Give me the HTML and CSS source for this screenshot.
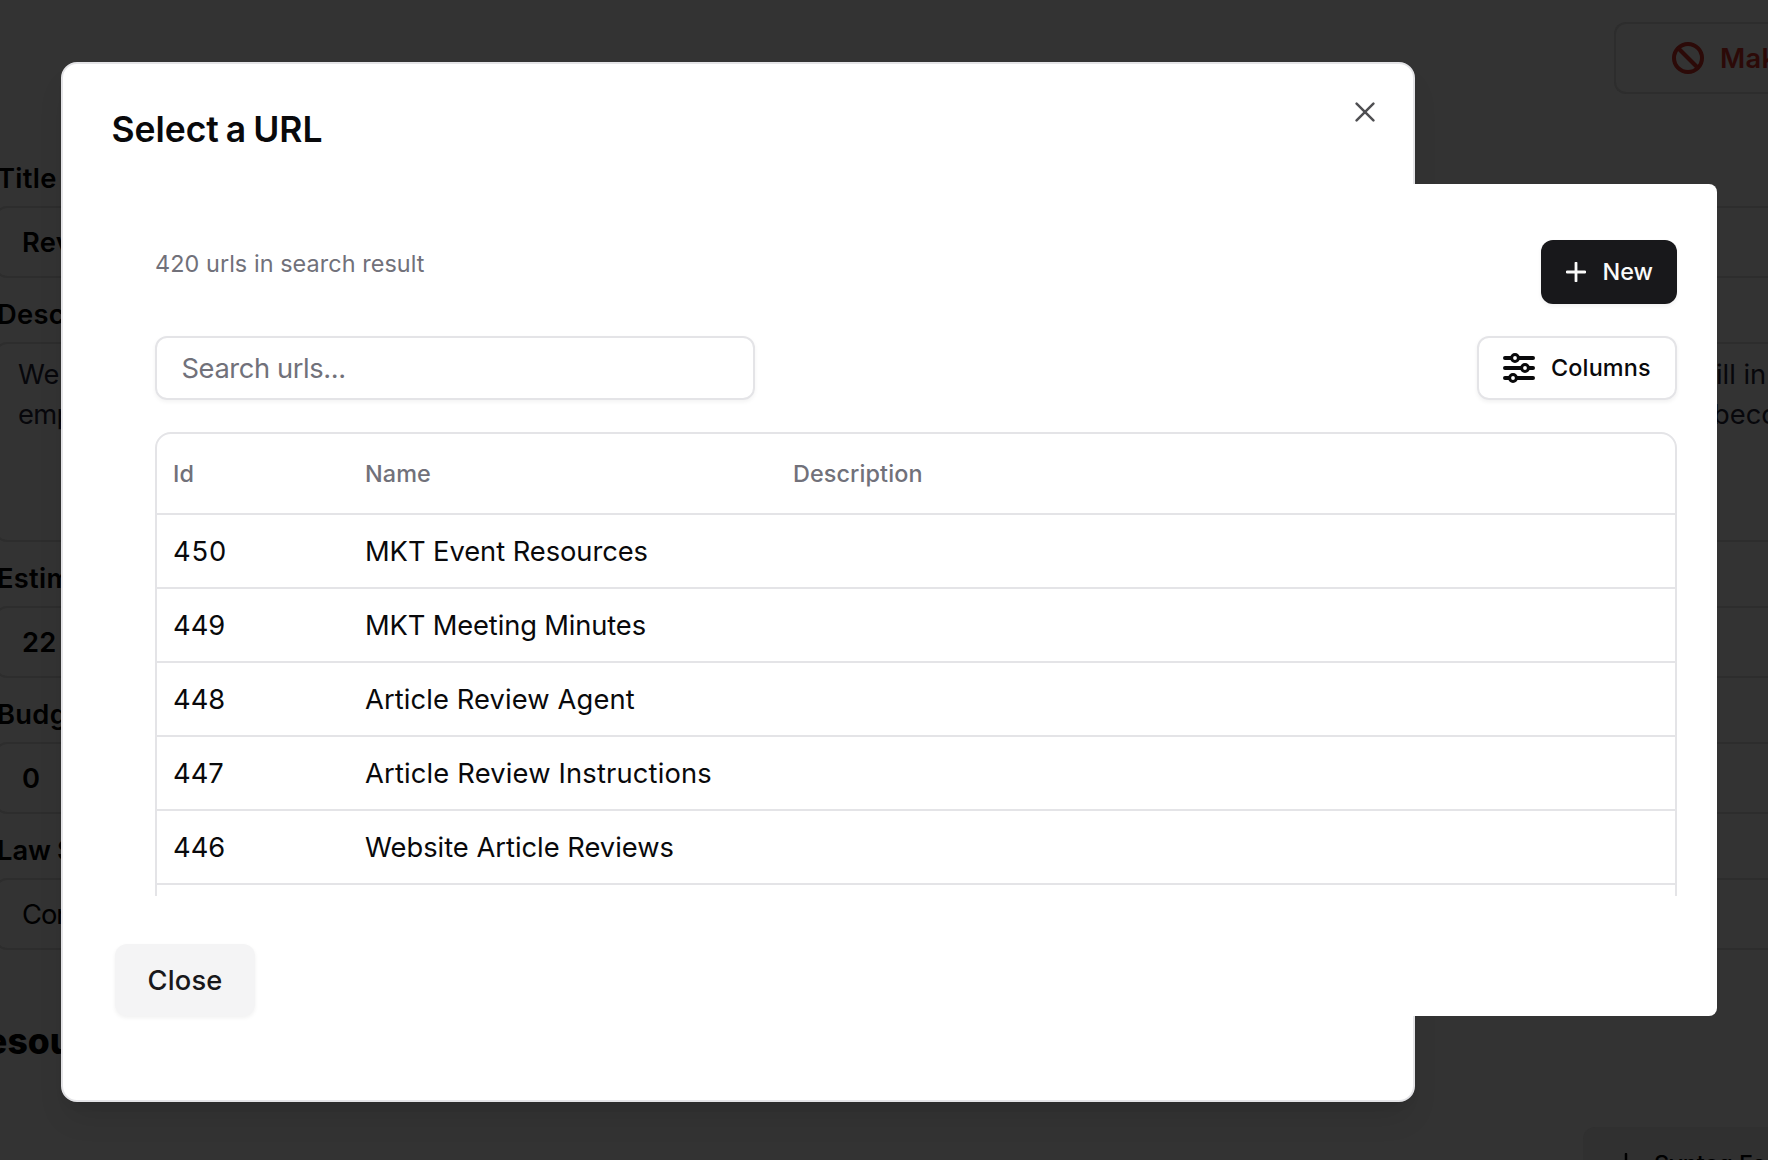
FILE: index.html
```html
<!DOCTYPE html>
<html lang="en">
<head>
<meta charset="utf-8">
<title>Select a URL</title>
<link rel="stylesheet" href="styles.css">
</head>
<body>
<div class="page">
  <div class="page-actions">
    <div class="make-button">
      <svg class="ban-icon" viewBox="0 0 32 32"><circle cx="16" cy="16" r="14"/><path d="M6.5 6.5 25.5 25.5"/></svg>
      <span>Mak</span>
    </div>
  </div>
  <div class="field">
    <div class="field-label">Title</div>
    <div class="field-input">Rev</div>
  </div>
  <div class="field">
    <div class="field-label">Desc</div>
    <div class="field-area">
      <div class="area-line"><span>We</span><span class="area-end">ill in</span></div>
      <div class="area-line"><span class="tight">emp</span><span class="area-end shifted">beco</span></div>
    </div>
  </div>
  <div class="field">
    <div class="field-label">Estim</div>
    <div class="field-input">22</div>
  </div>
  <div class="field">
    <div class="field-label">Budg</div>
    <div class="field-input">0</div>
  </div>
  <div class="field">
    <div class="field-label law">Law S</div>
    <div class="field-input light">Con</div>
  </div>
  <div class="section-title">Resou</div>
  <div class="form-button">
    <svg class="form-plus" viewBox="0 0 20 20"><path d="M10 1V19M1 10H19"/></svg>
    <span>Syntaq Fo</span>
  </div>
</div>

<div class="modal">
  <div class="modal-header">
    <h1 class="modal-title">Select a URL</h1>
    <svg class="modal-x" viewBox="0 0 20 20"><path d="M1.6 1.6 18.4 18.4M18.4 1.6 1.6 18.4"/></svg>
  </div>
  <div class="panel">
    <div class="viewport">
      <div class="result-row">
        <div class="result-count">420 urls in search result</div>
        <div class="new-button">
          <svg class="plus-icon" viewBox="0 0 20 20"><path d="M10 1V19M1 10H19"/></svg>
          <span class="button-text">New</span>
        </div>
      </div>
      <div class="toolbar">
        <div class="search-box">Search urls...</div>
        <div class="columns-button">
          <svg class="sliders-icon" viewBox="0 0 32 30">
            <path d="M2 5H30M2 15H30M2 25H30"/>
            <circle cx="12" cy="5" r="3.4"/><circle cx="22" cy="15" r="3.4"/><circle cx="10" cy="25" r="3.4"/>
          </svg>
          <span class="button-text">Columns</span>
        </div>
      </div>
      <div class="table">
        <div class="row head"><span>Id</span><span>Name</span><span>Description</span></div>
        <div class="row"><span class="wide">450</span><span class="snug">MKT Event Resources</span></div>
        <div class="row"><span>449</span><span class="snugger">MKT Meeting Minutes</span></div>
        <div class="row"><span>448</span><span class="loose">Article Review Agent</span></div>
        <div class="row"><span>447</span><span class="looser">Article Review Instructions</span></div>
        <div class="row"><span>446</span><span>Website Article Reviews</span></div>
        <div class="row"></div>
      </div>
    </div>
    <div class="close-button">Close</div>
  </div>
</div>
</body>
</html>
```
FILE: styles.css
```css
* { box-sizing: border-box; }
html, body { margin: 0; height: 100%; overflow: hidden; }
body {
  position: relative;
  background: #333;
  font-family: Inter, "Liberation Sans", sans-serif;
  color: #09090b;
}
svg { flex: none; fill: none; stroke: currentColor; stroke-linecap: round; }

/* dimmed page */
.page { width: 1768px; height: 1160px; overflow: hidden; color: #000; padding-top: 22px; }
.page-actions { display: flex; justify-content: flex-end; height: 136px; }
.make-button {
  display: flex; align-items: center; gap: 16px; flex: none;
  width: 154px; height: 72px; padding-left: 56px;
  border: 2px solid #2d2d2d; border-right: 0; border-radius: 12px 0 0 12px;
  color: #2c0a08; font-size: 27.3px; font-weight: 600; letter-spacing: .3px; white-space: nowrap;
}
.ban-icon { width: 32px; height: 32px; stroke-width: 4; }
.field { width: 1900px; margin-left: -5px; }
.field-label { height: 48px; line-height: 42px; padding-left: 2px; font-size: 27.3px; font-weight: 600; letter-spacing: .3px; }
.law { letter-spacing: 0; word-spacing: -1px; }
.field-input, .field-area { border: 2px solid #2d2d2d; border-radius: 12px; }
.field-input {
  height: 72px; margin-bottom: 16px; padding-left: 25px; line-height: 70px;
  font-size: 27.3px; font-weight: 600; letter-spacing: .3px;
}
.field-input.light { font-weight: 400; letter-spacing: -1px; }
.field-area { height: 200px; margin-bottom: 16px; padding: 11px 21px; }
.area-line { display: flex; width: 1860px; line-height: 40px; font-size: 27.3px; color: #07070b; }
.area-line span:first-child { width: 1698px; }
.area-line .tight { letter-spacing: -.7px; }
.area-end { white-space: nowrap; }
.area-end.shifted { margin-left: -3px; }
.section-title { margin: 68px 0 0 -37px; line-height: 48px; font-size: 35.5px; font-weight: 800; }
.form-button {
  display: flex; align-items: center; gap: 18px;
  width: 300px; height: 72px; margin: 61px 0 0 1583px; padding-left: 33px;
  border-radius: 12px; background: #303030; font-size: 23.5px; font-weight: 500; white-space: nowrap;
}
.form-plus { width: 20px; height: 20px; stroke-width: 2.5; }

/* dialog */
.modal {
  position: absolute; left: 61px; top: 62px; width: 1354px; height: 1040px;
  background: #fff; border: 2px solid #e4e4e7; border-radius: 16px;
  box-shadow: 0 20px 30px -6px rgba(0,0,0,.1), 0 8px 12px -8px rgba(0,0,0,.1);
}
.modal-header { display: flex; justify-content: space-between; height: 120px; padding: 0 38px 0 48.5px; }
.modal-title { margin: 48px 0 0; line-height: 36px; font-size: 35.5px; font-weight: 600; letter-spacing: -.05px; word-spacing: -1.8px; }
.modal-x { width: 20px; height: 20px; margin-top: 38px; color: #4f4f52; stroke-width: 2.5; }
.panel {
  width: 1604px; height: 832px; margin-left: 50px; padding: 0 40px 0 42px;
  background: #fff; border-radius: 8px;
}
.viewport { height: 712px; padding: 56px 5px 0; margin: 0 -5px; overflow: hidden; }
.result-row { display: flex; justify-content: space-between; height: 64px; margin-bottom: 32px; }
.result-count { line-height: 47px; font-size: 23.4px; letter-spacing: .07px; color: #71717a; }
.new-button, .columns-button {
  display: flex; align-items: center; height: 64px; border-radius: 12px;
  font-size: 23.4px; font-weight: 500; box-shadow: 0 2px 4px rgba(0,0,0,.06);
}
.button-text { padding-bottom: 2px; }
.new-button { width: 136px; padding-left: 24.5px; gap: 17px; background: #18181b; color: #fafafa; }
.plus-icon { width: 20px; height: 20px; stroke-width: 2.8; }
.toolbar { display: flex; justify-content: space-between; margin-bottom: 32px; }
.search-box {
  width: 600px; height: 64px; padding-left: 24.5px; line-height: 61px;
  border: 2px solid #e4e4e7; border-radius: 12px; box-shadow: 0 2px 4px rgba(0,0,0,.05);
  font-size: 27.3px; letter-spacing: -.4px; color: #71717a;
}
.columns-button { width: 200px; padding-left: 24px; gap: 16px; border: 2px solid #e4e4e7; }
.columns-button .button-text { letter-spacing: .15px; }
.sliders-icon { width: 32px; height: 30px; stroke-width: 4; }
.sliders-icon circle { fill: #fff; stroke-width: 3; }
.table { border: 2px solid #e4e4e7; border-radius: 16px; }
.row {
  display: grid; grid-template-columns: 192px 428px 1fr; align-items: center;
  height: 74px; padding-left: 16px; border-bottom: 2px solid #e4e4e7;
  font-size: 27.3px; white-space: nowrap;
}
.head { height: 81px; font-size: 23.4px; font-weight: 500; letter-spacing: .1px; color: #71717a; }
.wide { letter-spacing: .9px; }
.snug { letter-spacing: -.05px; }
.snugger { letter-spacing: -.13px; }
.loose { letter-spacing: .12px; }
.looser { letter-spacing: .18px; }
.close-button {
  width: 140px; height: 72px; margin: 48px 0 0 -40px; border-radius: 12px;
  background: #f4f4f5; box-shadow: 0 2px 4px rgba(0,0,0,.06);
  color: #18181b; font-size: 27.3px; font-weight: 500; line-height: 73px; letter-spacing: .2px; text-align: center;
}
```
